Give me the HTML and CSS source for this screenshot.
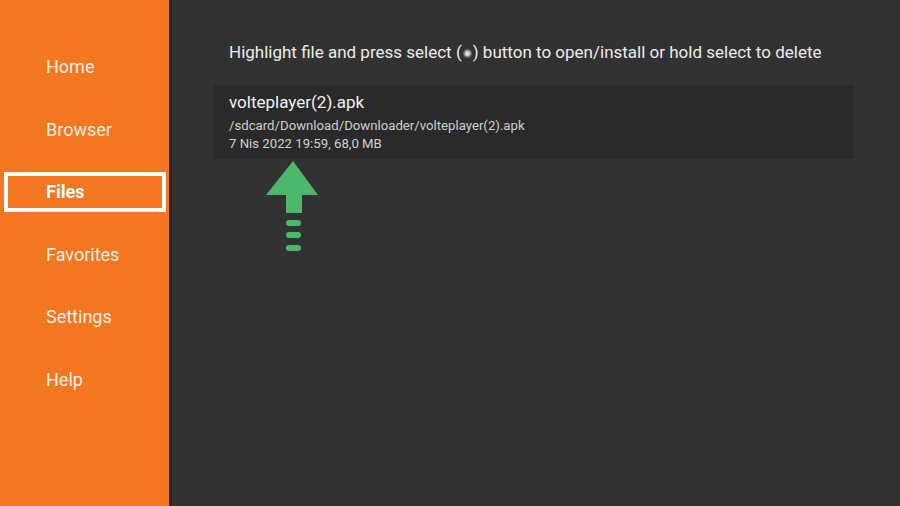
FILE: index.html
```html
<!DOCTYPE html>
<html lang="en">
<head>
  <meta charset="UTF-8">
  <title>Downloader - Files</title>
  <meta name="viewport" content="width=device-width, initial-scale=1.0">
  <link rel="stylesheet" href="styles.css">
</head>
<body>
  <div class="app">
    <!-- Sol menü -->
    <nav class="sidebar">
      <div class="nav-item">Home</div>
      <div class="nav-item">Browser</div>
      <div class="nav-item active">Files</div>
      <div class="nav-item">Favorites</div>
      <div class="nav-item">Settings</div>
      <div class="nav-item">Help</div>
    </nav>

    <main class="content">
      <p class="hint">Highlight file and press select (<span class="select-dot"></span>) button to open/install or hold select to delete</p>

      <div class="file-card">
        <div class="file-name">volteplayer(2).apk</div>
        <div class="file-meta">/sdcard/Download/Downloader/volteplayer(2).apk</div>
        <div class="file-meta">7 Nis 2022 19:59, 68,0 MB</div>
      </div>

      <!-- Yeşil ok -->
      <svg class="arrow" width="56" height="94" viewBox="0 0 56 94">
        <polygon points="29,1 54,35 2,35" fill="#4cb86b"/>
        <rect x="22" y="34" width="16" height="19" fill="#4cb86b"/>
        <rect x="22" y="60" width="15" height="6" rx="3" fill="#4cb86b"/>
        <rect x="22" y="72" width="15" height="6" rx="3" fill="#4cb86b"/>
        <rect x="22" y="85" width="15" height="6" rx="3" fill="#4cb86b"/>
      </svg>
    </main>
  </div>
</body>
</html>
```

FILE: styles.css
```css
body {
  margin: 0;
  font-family: Roboto, "Noto Sans", Arial, sans-serif;
  background: #323232;
}

.app {
  display: flex;
  width: 900px;
  height: 506px;
  overflow: hidden;
}

.sidebar {
  width: 169px;
  background: #f37721;
  border-right: 3px solid #2a2a2a;
  padding-top: 47px;
  box-sizing: content-box;
}

.nav-item {
  height: 40px;
  margin: 0 3px 22.5px 4px;
  padding-left: 42px;
  line-height: 40px;
  font-size: 18px;
  color: #fbeee4;
  box-sizing: border-box;
}

.nav-item.active {
  border: 4px solid #fff;
  padding-left: 38px;
  line-height: 32px;
  font-weight: bold;
  color: #fff;
}

.content {
  flex: 1;
  padding: 0 46px 0 42px;
}

.hint {
  margin: 41px 0 0 15px;
  font-size: 17px;
  line-height: 22px;
  color: #ececec;
  white-space: nowrap;
}

.select-dot {
  display: inline-block;
  width: 9px;
  height: 9px;
  margin: 0 1px 1px;
  border-radius: 50%;
  background: radial-gradient(circle, #d8d8d8 0 2px, #8a8a8a 3px, #5c5c5c 4.5px);
  vertical-align: middle;
}

.file-card {
  margin-top: 22px;
  height: 74px;
  padding: 4px 15px 0;
  background: #2a2a2a;
  box-sizing: border-box;
}

.file-name {
  font-size: 17px;
  line-height: 27px;
  margin-bottom: 1px;
  color: #f2f2f2;
}

.file-meta {
  font-size: 13.2px;
  line-height: 18px;
  color: #cfcfcf;
}

.arrow {
  display: block;
  margin: 1px 0 0 50px;
}
```
